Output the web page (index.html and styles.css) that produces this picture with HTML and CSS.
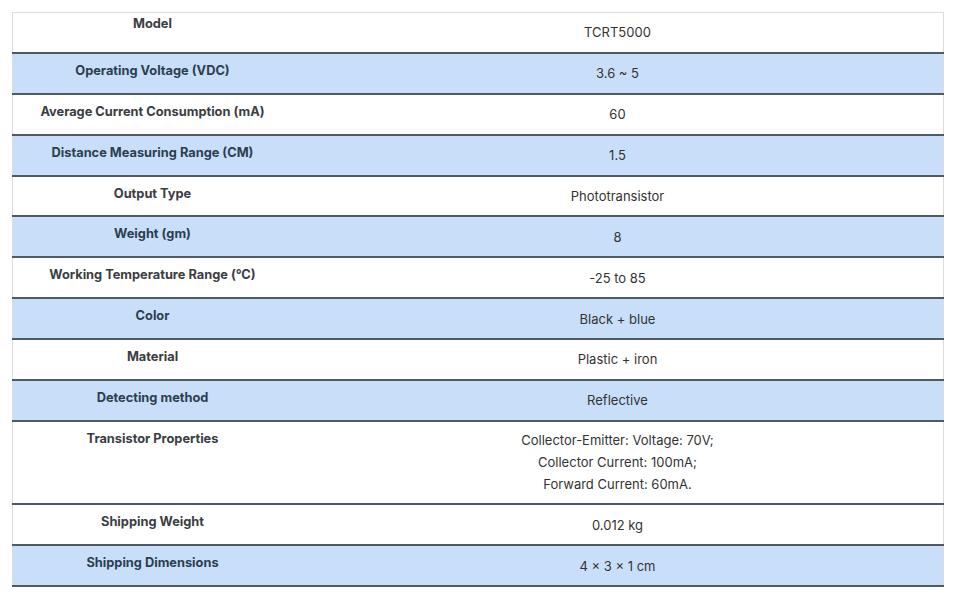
FILE: index.html
```html
<!DOCTYPE html>
<html lang="en">
<head>
<meta charset="utf-8">
<title>TCRT5000 Specifications</title>
<link rel="stylesheet" href="styles.css">
</head>
<body>
<table class="spec">
  <tbody>
    <tr class="first"><th>Model</th><td>TCRT5000</td></tr>
    <tr class="alt"><th>Operating Voltage (VDC)</th><td>3.6 ~ 5</td></tr>
    <tr><th>Average Current Consumption (mA)</th><td>60</td></tr>
    <tr class="alt"><th>Distance Measuring Range (CM)</th><td>1.5</td></tr>
    <tr><th>Output Type</th><td>Phototransistor</td></tr>
    <tr class="alt"><th>Weight (gm)</th><td>8</td></tr>
    <tr><th>Working Temperature Range (°C)</th><td>-25 to 85</td></tr>
    <tr class="alt"><th>Color</th><td>Black + blue</td></tr>
    <tr><th>Material</th><td>Plastic + iron</td></tr>
    <tr class="alt"><th>Detecting method</th><td>Reflective</td></tr>
    <tr><th>Transistor Properties</th><td class="multi">Collector-Emitter: Voltage: 70V;<br>Collector Current: 100mA;<br>Forward Current: 60mA.</td></tr>
    <tr><th>Shipping Weight</th><td>0.012 kg</td></tr>
    <tr class="alt"><th>Shipping Dimensions</th><td>4 × 3 × 1 cm</td></tr>
  </tbody>
</table>
</body>
</html>
```
FILE: styles.css
```css
html, body {
  background: #ffffff;
}
body {
  margin: 12px;
  font-family: Inter, "Noto Sans", "Liberation Sans", sans-serif;
  font-size: 13px;
  color: #333333;
}
.spec {
  width: 932px;
  border-collapse: collapse;
  border-top: 1px solid #dcdcdc;
  border-left: 1px solid #dcdcdc;
  border-right: 1px solid #dcdcdc;
}
.spec tr {
  border-bottom: 2px solid #4f5a62;
}
.spec th {
  width: 263px;
  padding: 6px 8px 0;
  vertical-align: top;
  text-align: center;
  font-weight: 700;
  font-size: 12.8px;
  line-height: 21px;
  color: #3a3d42;
}
.spec tr.first th {
  padding-top: 0;
}
.spec td {
  padding: 8.45px 8px;
  vertical-align: middle;
  text-align: center;
  font-weight: 400;
  line-height: 22px;
  color: #333333;
}
.spec td.multi {
  padding: 7.5px 8px 8px;
}
.spec tr.alt {
  background: #c9dff9;
}
.spec tr.alt th {
  color: #2c3e50;
}
```
